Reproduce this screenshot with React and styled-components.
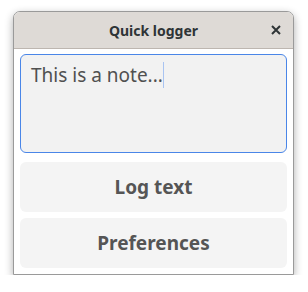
import React from 'react';
import styled, { createGlobalStyle } from 'styled-components';

const Global = createGlobalStyle`
  body {
    margin: 0;
    background: #ffffff;
    font-family: "Noto Sans", "Open Sans", sans-serif;
  }
`;

const Window = styled.div`
  margin: 11px 0 0 13px;
  width: 281px;
  height: 264px;
  box-sizing: border-box;
  border: 1px solid #9a9a9a;
  border-radius: 7px 7px 0 0;
  background: #ffffff;
  box-shadow: 0 3px 9px rgba(0, 0, 0, 0.32);
  display: flex;
  flex-direction: column;
  overflow: hidden;
`;

const TitleBar = styled.div`
  height: 37px;
  flex: none;
  box-sizing: border-box;
  background: #dedad6;
  border-bottom: 1px solid #bdb6b0;
  display: grid;
  grid-template-columns: 40px 1fr 40px;
  align-items: center;
`;

const Title = styled.div`
  grid-column: 2;
  text-align: center;
  font-size: 14px;
  font-weight: 700;
  color: #2e3436;
`;

const Close = styled.button`
  justify-self: end;
  margin-right: 5px;
  width: 24px;
  height: 24px;
  padding: 0;
  border: none;
  background: none;
  display: flex;
  align-items: center;
  justify-content: center;
`;

const Body = styled.div`
  flex: 1;
  padding: 5px 6px 6px;
  display: flex;
  flex-direction: column;
  gap: 6px;
`;

const Note = styled.div`
  height: 99px;
  box-sizing: border-box;
  margin-bottom: 3px;
  border: 1px solid #4a86e8;
  border-radius: 6px;
  background: #f2f2f2;
  padding: 7px 10px;
  font-size: 19px;
  color: #505050;
`;

const Caret = styled.span`
  display: inline-block;
  width: 1px;
  height: 26px;
  background: #a9c4f2;
  vertical-align: -6px;
`;

const Action = styled.button`
  height: 50px;
  border: none;
  border-radius: 6px;
  background: #f4f4f4;
  font-family: inherit;
  font-size: 19px;
  font-weight: 700;
  color: #555555;
`;

export default function App() {
  return (
    <>
      <Global />
      <Window>
        <TitleBar>
          <Title>Quick logger</Title>
          <Close aria-label="Close">
            <svg width="10" height="10" viewBox="0 0 10 10">
              <path d="M1 1L9 9M9 1L1 9" stroke="#2e3436" strokeWidth="2" />
            </svg>
          </Close>
        </TitleBar>
        <Body>
          <Note>
            This is a note...<Caret />
          </Note>
          <Action>Log text</Action>
          <Action>Preferences</Action>
        </Body>
      </Window>
    </>
  );
}
